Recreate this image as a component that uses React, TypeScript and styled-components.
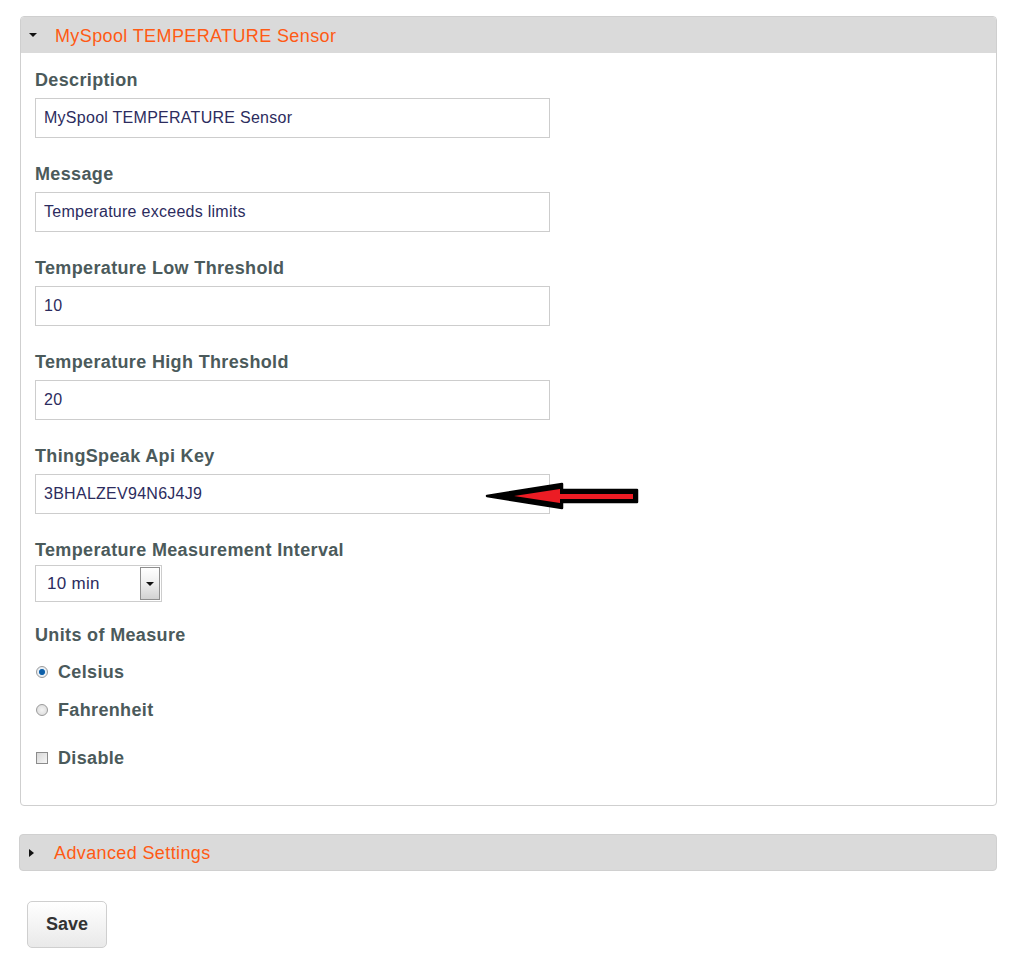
import React from "react";
import styled, { createGlobalStyle } from "styled-components";

const Global = createGlobalStyle`
  html, body { margin: 0; padding: 0; background: #fff; }
  body { font-family: "Liberation Sans", Arial, sans-serif; }
`;

const Page = styled.div`
  padding: 16px 15px 20px 20px;
  display: flex;
  flex-direction: column;
`;

const Panel = styled.section`
  width: 977px;
  box-sizing: border-box;
  border: 1px solid #cfcfcf;
  border-radius: 4px;
  display: flex;
  flex-direction: column;
`;

const Header = styled.div<{ $closed?: boolean }>`
  height: ${(p) => (p.$closed ? 37 : 36)}px;
  background: #dadada;
  border-radius: ${(p) => (p.$closed ? "4px" : "3px 3px 0 0")};
  border: ${(p) => (p.$closed ? "1px solid #d0d0d0" : "none")};
  box-sizing: border-box;
  display: flex;
  align-items: center;
  padding-left: ${(p) => (p.$closed ? 9 : 8)}px;
  gap: ${(p) => (p.$closed ? 20 : 18)}px;
`;

const HeaderTitle = styled.span`
  color: #ff5a14;
  font-size: 18px;
  line-height: 22px;
  letter-spacing: 0.38px;
  padding-top: 1px;
`;

const Body = styled.div`
  padding: 16px 14px 36px 14px;
  display: flex;
  flex-direction: column;
`;

const Field = styled.div<{ $gap?: number }>`
  position: relative;
  display: flex;
  flex-direction: column;
  gap: ${(p) => p.$gap ?? 7}px;
  margin-bottom: 25px;
`;

const Label = styled.div`
  font-size: 18px;
  line-height: 22px;
  font-weight: bold;
  color: #4b5a5b;
  letter-spacing: 0.35px;
`;

const Input = styled.div`
  width: 515px;
  height: 40px;
  box-sizing: border-box;
  border: 1px solid #cdcdcd;
  display: flex;
  align-items: center;
  padding-left: 8px;
  font-size: 16px;
  letter-spacing: 0.27px;
  color: #2c2c5e;
`;

const Select = styled.div`
  width: 127px;
  height: 37px;
  box-sizing: border-box;
  border: 1px solid #cdcdcd;
  display: flex;
  align-items: center;
  justify-content: space-between;
  padding: 1px 1px 1px 11px;
  font-size: 17px;
  letter-spacing: 0.3px;
  color: #2c2c5e;
`;

const SelectButton = styled.div`
  width: 20px;
  height: 33px;
  box-sizing: border-box;
  border: 1px solid #8e8e8e;
  background: linear-gradient(#ffffff 0%, #f0f0f0 45%, #d2d2d2 100%);
  display: flex;
  align-items: center;
  justify-content: center;
`;

const SmallTri = styled.span<{ $dir: "down" | "right" }>`
  width: 0;
  height: 0;
  ${(p) =>
    p.$dir === "down"
      ? `border-left: 4px solid transparent; border-right: 4px solid transparent; border-top: 4px solid #111;`
      : `border-top: 4px solid transparent; border-bottom: 4px solid transparent; border-left: 5px solid #111;`}
`;

const ChoiceGroup = styled.div`
  display: flex;
  flex-direction: column;
  gap: 16px;
  margin-top: 15px;
`;

const Choice = styled.label`
  display: flex;
  align-items: center;
  gap: 10px;
  font-size: 18px;
  line-height: 22px;
  font-weight: bold;
  letter-spacing: 0.35px;
  color: #4b5a5b;
  padding-left: 1px;
`;

const Radio = styled.span<{ $checked?: boolean }>`
  width: 12px;
  height: 12px;
  box-sizing: border-box;
  border-radius: 50%;
  border: 1px solid #9a9a9a;
  background: ${(p) =>
    p.$checked
      ? "radial-gradient(circle, #0d5fa8 0 2.5px, #5b9ad0 3px, #e8eef4 3.5px)"
      : "radial-gradient(circle, #f4f4f4 0, #d8d8d8 100%)"};
`;

const Check = styled.span`
  width: 12px;
  height: 12px;
  box-sizing: border-box;
  border: 1px solid #8c8c8c;
  background: linear-gradient(135deg, #d8d8d8, #f6f6f6);
`;

const DisableRow = styled.div`
  margin-top: 26px;
`;

const Advanced = styled.div`
  width: 978px;
  margin-top: 28px;
  margin-left: -1px;
`;

const SaveButton = styled.button`
  margin-top: 30px;
  margin-left: 7px;
  width: 80px;
  height: 47px;
  border: 1px solid #cfcfcf;
  border-radius: 5px;
  background: linear-gradient(#ffffff, #e9e9e9);
  font-family: "Liberation Sans", Arial, sans-serif;
  font-size: 18px;
  font-weight: bold;
  color: #333;
  align-self: flex-start;
`;

const ArrowMark = styled.svg`
  position: absolute;
  left: 449px;
  top: 34px;
`;

const fields = [
  { label: "Description", value: "MySpool TEMPERATURE Sensor" },
  { label: "Message", value: "Temperature exceeds limits" },
  { label: "Temperature Low Threshold", value: "10" },
  { label: "Temperature High Threshold", value: "20" },
];

export default function App() {
  return (
    <>
      <Global />
      <Page>
        <Panel>
          <Header>
            <SmallTri $dir="down" />
            <HeaderTitle>MySpool TEMPERATURE Sensor</HeaderTitle>
          </Header>
          <Body>
            {fields.map((f) => (
              <Field key={f.label}>
                <Label>{f.label}</Label>
                <Input>{f.value}</Input>
              </Field>
            ))}
            <Field>
              <Label>ThingSpeak Api Key</Label>
              <Input>3BHALZEV94N6J4J9</Input>
              <ArrowMark width="156" height="34" viewBox="0 0 156 34">
                <polygon
                  points="3,17 78,5 78,11 153,11 153,23 78,23 78,29"
                  fill="#000"
                  stroke="#000"
                  strokeWidth="2.5"
                  strokeLinejoin="round"
                />
                <polygon
                  points="30,17 76,10 76,15 149,15 149,20 76,20 76,24"
                  fill="#ec1c24"
                />
              </ArrowMark>
            </Field>
            <Field $gap={4}>
              <Label>Temperature Measurement Interval</Label>
              <Select>
                <span>10 min</span>
                <SelectButton>
                  <SmallTri $dir="down" />
                </SelectButton>
              </Select>
            </Field>
            <Label style={{ marginTop: -3 }}>Units of Measure</Label>
            <ChoiceGroup>
              <Choice>
                <Radio $checked />
                Celsius
              </Choice>
              <Choice>
                <Radio />
                Fahrenheit
              </Choice>
            </ChoiceGroup>
            <DisableRow>
              <Choice>
                <Check />
                Disable
              </Choice>
            </DisableRow>
          </Body>
        </Panel>
        <Advanced>
          <Header $closed>
            <SmallTri $dir="right" />
            <HeaderTitle>Advanced Settings</HeaderTitle>
          </Header>
        </Advanced>
        <SaveButton>Save</SaveButton>
      </Page>
    </>
  );
}
